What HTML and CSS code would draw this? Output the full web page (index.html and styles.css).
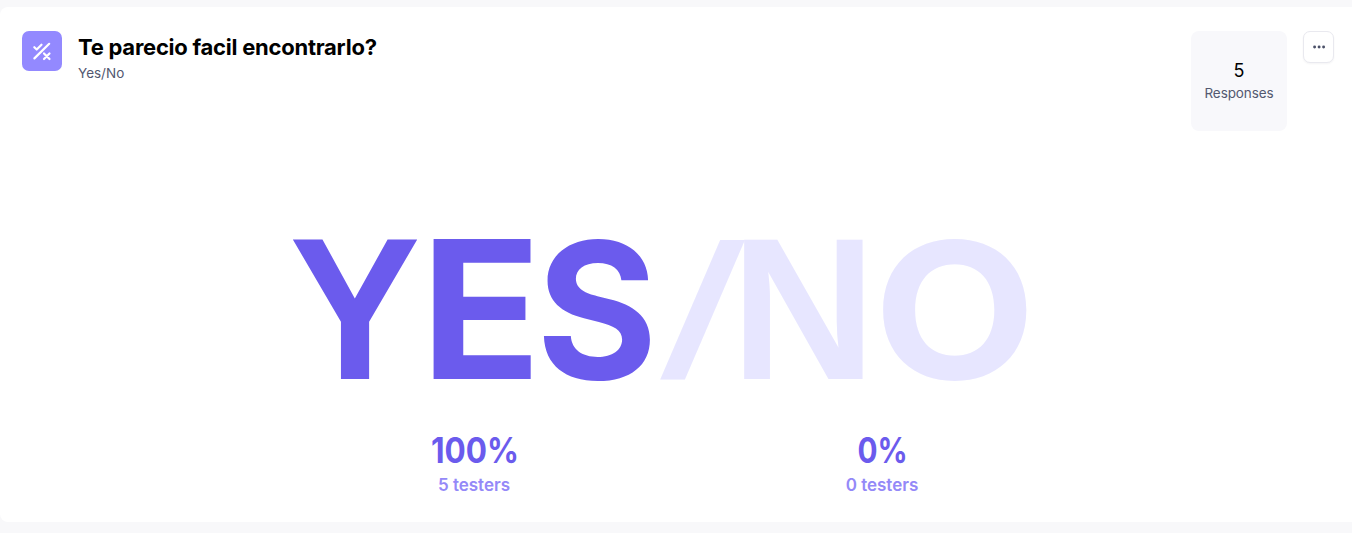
FILE: index.html
```html
<!DOCTYPE html>
<html lang="es">
<head>
<meta charset="utf-8">
<title>Te parecio facil encontrarlo?</title>
<link rel="stylesheet" href="styles.css">
</head>
<body>
<main class="card">
  <header class="head">
    <div class="badge">
      <svg width="40" height="40" viewBox="0 0 40 40" fill="none" stroke="#fff" stroke-width="2.2" stroke-linecap="round" stroke-linejoin="round">
        <path d="M12.4 27.4 27.2 12.8M12.3 16.2l2.4 2.3 4.8-4.8M22 22.5l5.5 5.5M27.5 22.5 22 28"/>
      </svg>
    </div>
    <div class="titles">
      <h1 class="title">Te parecio facil encontrarlo?</h1>
      <p class="kind">Yes/No</p>
    </div>
    <div class="count">
      <span class="count-number">5</span>
      <span class="count-label">Responses</span>
    </div>
    <button class="more" aria-label="More">
      <svg width="14" height="4" viewBox="0 0 14 4" fill="#4b5068"><circle cx="2.6" cy="2" r="1.45"/><circle cx="7.1" cy="2" r="1.45"/><circle cx="11.6" cy="2" r="1.45"/></svg>
    </button>
  </header>
  <svg class="banner" width="740" height="146" viewBox="290 236 740 146">
    <g class="yes">
      <text class="straight" transform="translate(289.6 379) scale(.981 1.016)">Y</text>
      <text transform="translate(420.4 379) scale(.995 .96)">E</text>
      <text transform="translate(536.2 378.6) scale(.927 .952)">S</text>
    </g>
    <g class="no">
      <text class="slash" transform="translate(655.2 361.7) scale(1.28 .8)">/</text>
      <text class="straight" transform="translate(730.8 379) scale(1.006 1.016)">N</text>
      <text transform="translate(873.5 378.6) scale(1.054 .952)">O</text>
    </g>
  </svg>
  <section class="results">
    <div class="result">
      <span class="percent percent-full">100%</span>
      <span class="testers">5 testers</span>
    </div>
    <div class="result">
      <span class="percent percent-zero">0%</span>
      <span class="testers">0 testers</span>
    </div>
  </section>
</main>
</body>
</html>
```

FILE: styles.css
```css
* { box-sizing: border-box; }
body {
  margin: 0;
  height: 533px;
  padding-top: 7px;
  overflow: hidden;
  background: #f8f8fa;
  font-family: Inter, "Liberation Sans", sans-serif;
}
.card {
  height: 515px;
  padding: 24px 18px 0 22px;
  background: #fff;
  border-radius: 8px 0 0 8px;
}
.head {
  display: flex;
  align-items: flex-start;
  height: 100px;
}
.badge {
  width: 40px;
  height: 40px;
  border-radius: 7px;
  background: #9389ff;
}
.badge svg, .more svg { display: block; }
.titles { margin-left: 16px; flex: 1; }
.title {
  margin: 2px 0 0;
  font-size: 22px;
  line-height: 28px;
  font-weight: 700;
  letter-spacing: -0.25px;
  color: #000;
}
.kind {
  margin: 2px 0 0;
  font-size: 13.5px;
  line-height: 20px;
  color: #535870;
}
.count {
  display: flex;
  flex-direction: column;
  align-items: center;
  width: 96px;
  height: 100px;
  padding-top: 28px;
  border-radius: 8px;
  background: #f8f8fb;
}
.count-number { font-size: 18px; line-height: 24px; color: #000; }
.count-label { font-size: 13.5px; line-height: 20px; letter-spacing: -0.1px; color: #535870; }
.more {
  display: flex;
  align-items: center;
  justify-content: center;
  width: 31px;
  height: 32px;
  margin-left: 16px;
  padding: 0;
  border: 1px solid #e9e9ef;
  border-radius: 7px;
  background: #fff;
  box-shadow: 0 1px 2px rgba(30, 30, 60, .05);
}
.banner {
  display: block;
  overflow: visible;
  margin: 105px 0 0 268px;
  font-size: 200px;
  font-weight: 700;
}
.straight { font-family: "Liberation Sans", Arial, sans-serif; }
.slash { font-weight: 500; }
.yes { fill: #6b5bed; }
.no { fill: #e7e6ff; }
.results {
  display: grid;
  grid-template-columns: 408px 408px;
  margin: 48px 0 0 248px;
}
.result {
  display: flex;
  flex-direction: column;
  align-items: center;
}
.percent {
  font-size: 35px;
  line-height: 40px;
  font-weight: 700;
  color: #6b5bed;
}
.percent-full { transform: translateX(1px) scaleX(.9); }
.percent-zero { transform: translateX(1px) scaleX(.85); }
.testers {
  margin-top: 4px;
  font-size: 17px;
  line-height: 22px;
  font-weight: 600;
  color: #9489f8;
}
```
